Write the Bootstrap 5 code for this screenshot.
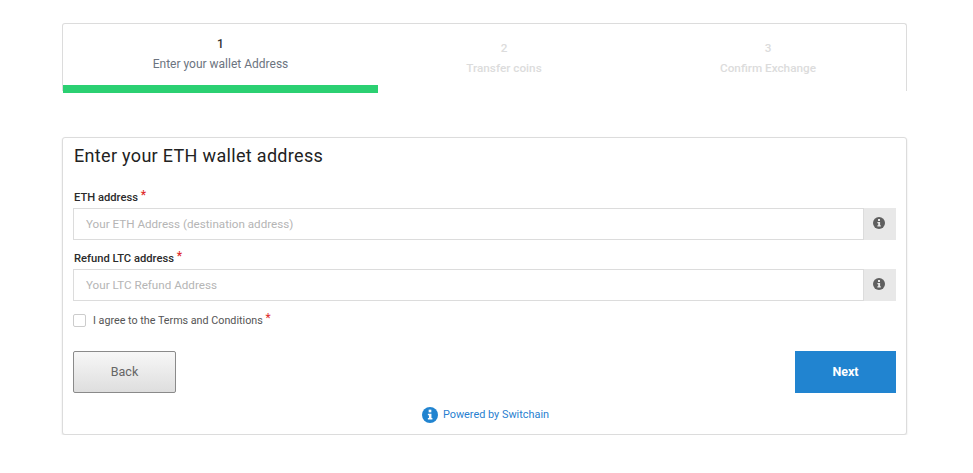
<!DOCTYPE html>
<html lang="en">
<head>
  <meta charset="UTF-8">
  <meta name="viewport" content="width=device-width, initial-scale=1.0">
  <title>Exchange</title>
  <link href="https://cdn.jsdelivr.net/npm/bootstrap@5.3.0/dist/css/bootstrap.min.css" rel="stylesheet">
  <style>
    body { background: #fff; font-family: "Roboto", "Liberation Sans", sans-serif; color: #222; }
    .page-wrap { padding: 23px 66px 0 62px; }
    .steps { height: 68px; border: 1px solid #dcdcdc; border-bottom: 0; border-radius: 3px 3px 0 0; }
    .step { text-align: center; font-size: 11.75px; color: #dcdcdc; font-weight: 500; padding-top: 14px; line-height: 20px; }
    .step-1 { width: 315px; font-size: 12px; color: #6c7480; font-weight: 400; padding-top: 10px; border-bottom: 8px solid #2bd072; height: 69px; }
    .step-1 .step-num { color: #333; font-weight: 500; }
    .step-2 { width: 252px; }
    .step-3 { width: 276px; }
    .form-box { margin-top: 46px; height: 298px; border: 1px solid #dcdcdc; border-radius: 3px; box-shadow: 0 1px 2px rgba(0,0,0,.12); padding: 6px 10px 0; }
    .form-title { font-size: 18px; font-weight: 400; line-height: 24px; color: #222; margin: 0 0 21px 1px; letter-spacing: .32px; }
    .addr-label { font-size: 11.2px; font-weight: 500; color: #2b2b2b; line-height: 16px; margin-bottom: 2px; margin-left: 1px; display: block; }
    .req { color: #e02b2b; font-size: 12px; position: relative; top: -2px; }
    .addr-group { height: 32px; margin-bottom: 10px; }
    .addr-group .form-control { border: 1px solid #dcdcdc; border-radius: 0; font-size: 11.65px; padding: 0 12px; height: 32px; }
    .addr-group .form-control::placeholder { color: #b5b5b5; }
    .addr-icon { width: 33px; padding: 0 1px 3px 0; background: #e8e8e8; }
    .terms { font-size: 10.75px; color: #555; line-height: 16px; margin-top: 11px; gap: 7px; }
    .terms .form-check-input { width: 13px; height: 13px; margin: 0; border: 1px solid #ccc; border-radius: 2px; }
    .btn-row { margin-top: 22px; }
    .btn-back { width: 103px; height: 42px; border: 1px solid #8a8a8a; border-radius: 2px; background: linear-gradient(#f7f7f7, #dedede); color: #666; font-size: 12.5px; }
    .btn-next { width: 101px; height: 42px; border: 0; border-radius: 0; background: #2184d0; color: #fff; font-size: 12.5px; font-weight: 700; }
    .powered { font-size: 10.9px; color: #2a7fd0; margin-top: 14px; margin-left: 2px; gap: 5px; }
  </style>
</head>
<body>
<div class="page-wrap">
  <div class="steps d-flex">
    <div class="step step-1"><div class="step-num">1</div>Enter your wallet Address</div>
    <div class="step step-2"><div class="step-num">2</div>Transfer coins</div>
    <div class="step step-3"><div class="step-num">3</div>Confirm Exchange</div>
  </div>

  <div class="form-box bg-white">
    <h1 class="form-title">Enter your ETH wallet address</h1>

    <label class="addr-label">ETH address <span class="req">*</span></label>
    <div class="input-group addr-group">
      <input type="text" class="form-control" placeholder="Your ETH Address (destination address)">
      <div class="addr-icon d-flex align-items-center justify-content-center">
        <svg width="12" height="12" viewBox="0 0 12 12"><circle cx="6" cy="6" r="6" fill="#5f5f5f"/><rect x="5" y="2" width="2" height="2" fill="#e8e8e8"/><path d="M4.4 5h2.7v3.2h.7V9.4H4.4V8.2h.8V6.2h-.8z" fill="#e8e8e8"/></svg>
      </div>
    </div>

    <label class="addr-label">Refund LTC address <span class="req">*</span></label>
    <div class="input-group addr-group">
      <input type="text" class="form-control" placeholder="Your LTC Refund Address">
      <div class="addr-icon d-flex align-items-center justify-content-center">
        <svg width="12" height="12" viewBox="0 0 12 12"><circle cx="6" cy="6" r="6" fill="#5f5f5f"/><rect x="5" y="2" width="2" height="2" fill="#e8e8e8"/><path d="M4.4 5h2.7v3.2h.7V9.4H4.4V8.2h.8V6.2h-.8z" fill="#e8e8e8"/></svg>
      </div>
    </div>

    <div class="terms d-flex align-items-center">
      <input class="form-check-input" type="checkbox">
      <span>I agree to the Terms and Conditions <span class="req">*</span></span>
    </div>

    <div class="btn-row d-flex justify-content-between">
      <button type="button" class="btn btn-back">Back</button>
      <button type="button" class="btn btn-next">Next</button>
    </div>

    <div class="powered d-flex align-items-center justify-content-center">
      <svg width="16" height="16" viewBox="0 0 12 12"><circle cx="6" cy="6" r="6" fill="#2184d0"/><rect x="5" y="2" width="2" height="2" fill="#fff"/><path d="M4.4 5h2.7v3.2h.7V9.4H4.4V8.2h.8V6.2h-.8z" fill="#fff"/></svg>
      <span>Powered by Switchain</span>
    </div>
  </div>
</div>
<script src="https://cdn.jsdelivr.net/npm/bootstrap@5.3.0/dist/js/bootstrap.bundle.min.js"></script>
</body>
</html>
